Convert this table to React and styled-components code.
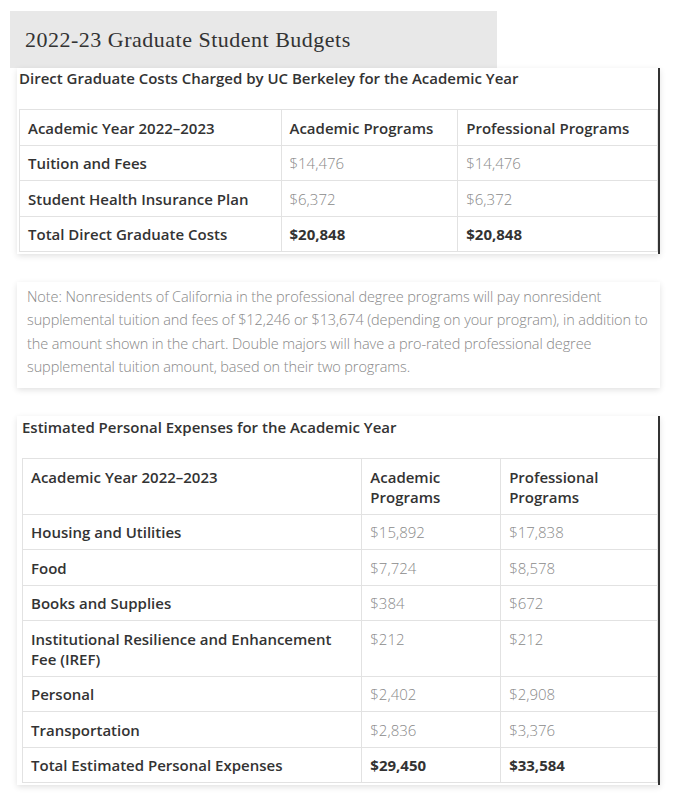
import styled, { createGlobalStyle } from "styled-components";

const GlobalStyle = createGlobalStyle`
  body {
    margin: 0;
    background: #ffffff;
    font-family: "Open Sans", "Liberation Sans", sans-serif;
    color: #333333;
  }
`;

const Page = styled.div`
  width: 676px;
  padding: 11px 0 10px 10px;
  box-sizing: border-box;
`;

const Heading = styled.h2`
  width: 487px;
  height: 57px;
  margin: 0;
  padding: 0 0 0 15px;
  box-sizing: border-box;
  display: flex;
  align-items: center;
  background: #e8e8e8;
  font-family: "Liberation Serif", "DejaVu Serif", serif;
  font-weight: 400;
  font-size: 22px;
  letter-spacing: 0.5px;
  color: #333333;
`;

const Card = styled.section`
  width: 643px;
  margin-left: 7px;
  margin-top: ${(p) => p.$top || 0}px;
  padding: ${(p) => p.$pad || "0 0 2px 2px"};
  box-sizing: border-box;
  background: #ffffff;
  box-shadow: 0 2px 6px rgba(0, 0, 0, 0.12);
  border-right: ${(p) => (p.$edge ? "2px solid #333333" : "none")};
`;

const CardTitle = styled.h3`
  margin: 0 0 21px;
  font-size: 15px;
  line-height: 20px;
  font-weight: 600;
  color: #333333;
`;

const Table = styled.table`
  width: ${(p) => p.$width}px;
  border-collapse: collapse;
  font-size: 15px;
  line-height: 20px;

  td,
  th {
    border: 1px solid #e2e2e2;
    padding: 7.5px 8px 7px;
    text-align: left;
    vertical-align: top;
  }
`;

const Label = styled.th`
  font-weight: 600;
  color: #333333;
`;

const Value = styled.td`
  font-weight: ${(p) => (p.$total ? 700 : 300)};
  color: ${(p) => (p.$total ? "#333333" : "#8a8a8a")};
`;

const Note = styled.p`
  margin: 0;
  padding: 3px 0 10px 10px;
  font-size: 14.5px;
  line-height: 23.3px;
  font-weight: 300;
  letter-spacing: -0.1px;
  color: #888888;
`;

const direct = [
  ["Tuition and Fees", "$14,476", "$14,476"],
  ["Student Health Insurance Plan", "$6,372", "$6,372"],
  ["Total Direct Graduate Costs", "$20,848", "$20,848", true],
];

const personal = [
  ["Housing and Utilities", "$15,892", "$17,838"],
  ["Food", "$7,724", "$8,578"],
  ["Books and Supplies", "$384", "$672"],
  ["Institutional Resilience and Enhancement Fee (IREF)", "$212", "$212"],
  ["Personal", "$2,402", "$2,908"],
  ["Transportation", "$2,836", "$3,376"],
  ["Total Estimated Personal Expenses", "$29,450", "$33,584", true],
];

function BudgetTable({ rows, cols, width }) {
  return (
    <Table $width={width}>
      <colgroup>
        {cols.map((w, i) => (
          <col key={i} style={{ width: w }} />
        ))}
      </colgroup>
      <thead>
        <tr>
          <Label>Academic Year 2022–2023</Label>
          <Label>Academic Programs</Label>
          <Label>Professional Programs</Label>
        </tr>
      </thead>
      <tbody>
        {rows.map(([label, a, b, total]) => (
          <tr key={label}>
            <Label>{label}</Label>
            <Value $total={total}>{a}</Value>
            <Value $total={total}>{b}</Value>
          </tr>
        ))}
      </tbody>
    </Table>
  );
}

function App() {
  return (
    <>
      <GlobalStyle />
      <Page>
        <Heading>2022-23 Graduate Student Budgets</Heading>
        <Card $edge $pad="0 0 2px 2px">
          <CardTitle>Direct Graduate Costs Charged by UC Berkeley for the Academic Year</CardTitle>
          <BudgetTable rows={direct} cols={[262, 177, 200]} width={639} />
        </Card>
        <Card $top={28} $pad="0">
          <Note>
            Note: Nonresidents of California in the professional degree programs will pay nonresident
            supplemental tuition and fees of $12,246 or $13,674 (depending on your program), in addition to
            the amount shown in the chart. Double majors will have a pro-rated professional degree
            supplemental tuition amount, based on their two programs.
          </Note>
        </Card>
        <Card $top={28} $edge $pad="1px 0 2px 5px">
          <CardTitle>Estimated Personal Expenses for the Academic Year</CardTitle>
          <BudgetTable rows={personal} cols={[340, 139, 157]} width={636} />
        </Card>
      </Page>
    </>
  );
}

export default App;
